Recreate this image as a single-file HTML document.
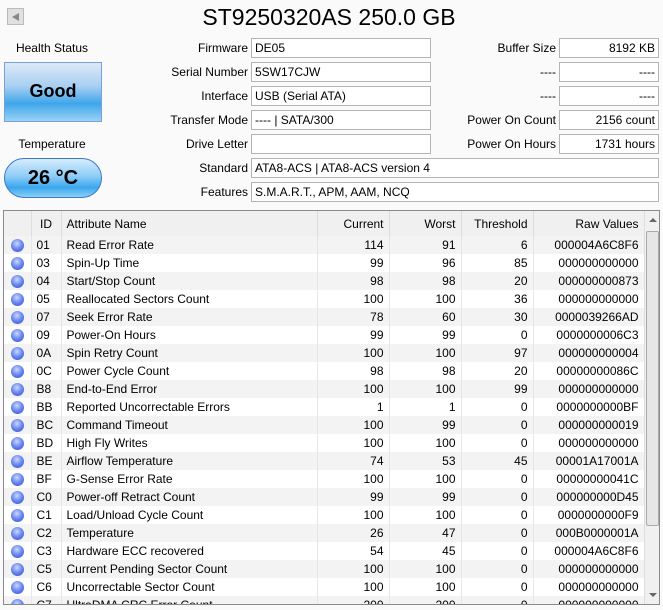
<!DOCTYPE html><html><head><style>
body{margin:0;width:663px;height:610px;background:#fafafa;font-family:"Liberation Sans",sans-serif;font-size:12px;color:#000;position:relative;overflow:hidden}
.a{position:absolute}
.lbl{position:absolute;text-align:right;width:150px}
.box{position:absolute;border:1px solid #b4b4b4;background:#fff;line-height:18px;padding:0 3px;box-sizing:border-box;height:20px}
.r{text-align:right}
table{border-collapse:collapse;table-layout:fixed;position:absolute;left:4px;top:212px;width:640px}
td{height:18px;padding:0 5px;white-space:nowrap;overflow:hidden;border-right:1px solid #e6e6e6;font-size:12px}
th{height:25px;font-weight:normal;padding:0 5px;border-right:1px solid #ddd;background:#f0f0f0;font-size:12px}
tr:nth-child(even) td{background:#f3f3f3}
.n{text-align:right}
.dot{width:13px;height:13px;border-radius:50%;background:radial-gradient(circle at 45% 35%,#cfd8ff 0,#6f8cf2 45%,#2c48c8 100%);margin:0 auto}
</style></head><body>
<div class="a" style="left:7px;top:8px;width:17px;height:17px;background:#e0e0e0;border:1px solid #bbb;box-sizing:border-box;"><div style="margin:4px 0 0 4px;width:0;height:0;border-top:4px solid transparent;border-bottom:4px solid transparent;border-right:7px solid #888"></div></div>
<div class="a" style="left:129px;top:4px;width:400px;text-align:center;font-size:23px">ST9250320AS 250.0 GB</div>
<div class="a" style="left:0;top:41px;width:104px;text-align:center">Health Status</div>
<div class="a" style="left:4px;top:62px;width:98px;height:60px;border:1px solid #7aa0d8;box-sizing:border-box;background:linear-gradient(#dde9f8,#a8cff2 40%,#3ea6ea 70%,#9ad2f6);text-align:center;line-height:56px;font-weight:bold;font-size:18px">Good</div>
<div class="a" style="left:0;top:137px;width:104px;text-align:center">Temperature</div>
<div class="a" style="left:4px;top:158px;width:98px;height:40px;border:1px solid #3a7ac8;box-sizing:border-box;border-radius:20px;background:linear-gradient(#d6ecfc,#8fcdf6 45%,#3aa6ee 75%,#8cd0f6);text-align:center;line-height:38px;font-weight:bold;font-size:20px">26 °C</div>

<div class="lbl" style="left:98px;top:41px">Firmware</div><div class="box" style="left:251px;top:38px;width:180px">DE05</div>
<div class="lbl" style="left:98px;top:65px">Serial Number</div><div class="box" style="left:251px;top:62px;width:180px">5SW17CJW</div>
<div class="lbl" style="left:98px;top:89px">Interface</div><div class="box" style="left:251px;top:86px;width:180px">USB (Serial ATA)</div>
<div class="lbl" style="left:98px;top:113px">Transfer Mode</div><div class="box" style="left:251px;top:110px;width:180px">---- | SATA/300</div>
<div class="lbl" style="left:98px;top:137px">Drive Letter</div><div class="box" style="left:251px;top:134px;width:180px"></div>
<div class="lbl" style="left:98px;top:161px">Standard</div><div class="box" style="left:251px;top:158px;width:408px">ATA8-ACS | ATA8-ACS version 4</div>
<div class="lbl" style="left:98px;top:185px">Features</div><div class="box" style="left:251px;top:182px;width:408px">S.M.A.R.T., APM, AAM, NCQ</div>

<div class="lbl" style="left:406px;top:41px">Buffer Size</div><div class="box r" style="left:559px;top:38px;width:100px">8192 KB</div>
<div class="lbl" style="left:406px;top:65px">----</div><div class="box r" style="left:559px;top:62px;width:100px">----</div>
<div class="lbl" style="left:406px;top:89px">----</div><div class="box r" style="left:559px;top:86px;width:100px">----</div>
<div class="lbl" style="left:406px;top:113px">Power On Count</div><div class="box r" style="left:559px;top:110px;width:100px">2156 count</div>
<div class="lbl" style="left:406px;top:137px">Power On Hours</div><div class="box r" style="left:559px;top:134px;width:100px">1731 hours</div>

<div class="a" style="left:3px;top:210px;width:657px;height:395px;border:1px solid #8a8a8a;box-sizing:border-box;background:#fff;overflow:hidden">
<table style="left:0;top:0">
<colgroup><col style="width:27px"><col style="width:30px"><col style="width:256px"><col style="width:72px"><col style="width:72px"><col style="width:72px"><col style="width:111px"></colgroup>
<tr><th></th><th>ID</th><th style="text-align:left">Attribute Name</th><th class="n">Current</th><th class="n">Worst</th><th class="n">Threshold</th><th class="n">Raw Values</th></tr>
<tr><td><div class="dot"></div></td><td>01</td><td>Read Error Rate</td><td class="n">114</td><td class="n">91</td><td class="n">6</td><td class="n">000004A6C8F6</td></tr>
<tr><td><div class="dot"></div></td><td>03</td><td>Spin-Up Time</td><td class="n">99</td><td class="n">96</td><td class="n">85</td><td class="n">000000000000</td></tr>
<tr><td><div class="dot"></div></td><td>04</td><td>Start/Stop Count</td><td class="n">98</td><td class="n">98</td><td class="n">20</td><td class="n">000000000873</td></tr>
<tr><td><div class="dot"></div></td><td>05</td><td>Reallocated Sectors Count</td><td class="n">100</td><td class="n">100</td><td class="n">36</td><td class="n">000000000000</td></tr>
<tr><td><div class="dot"></div></td><td>07</td><td>Seek Error Rate</td><td class="n">78</td><td class="n">60</td><td class="n">30</td><td class="n">0000039266AD</td></tr>
<tr><td><div class="dot"></div></td><td>09</td><td>Power-On Hours</td><td class="n">99</td><td class="n">99</td><td class="n">0</td><td class="n">0000000006C3</td></tr>
<tr><td><div class="dot"></div></td><td>0A</td><td>Spin Retry Count</td><td class="n">100</td><td class="n">100</td><td class="n">97</td><td class="n">000000000004</td></tr>
<tr><td><div class="dot"></div></td><td>0C</td><td>Power Cycle Count</td><td class="n">98</td><td class="n">98</td><td class="n">20</td><td class="n">00000000086C</td></tr>
<tr><td><div class="dot"></div></td><td>B8</td><td>End-to-End Error</td><td class="n">100</td><td class="n">100</td><td class="n">99</td><td class="n">000000000000</td></tr>
<tr><td><div class="dot"></div></td><td>BB</td><td>Reported Uncorrectable Errors</td><td class="n">1</td><td class="n">1</td><td class="n">0</td><td class="n">0000000000BF</td></tr>
<tr><td><div class="dot"></div></td><td>BC</td><td>Command Timeout</td><td class="n">100</td><td class="n">99</td><td class="n">0</td><td class="n">000000000019</td></tr>
<tr><td><div class="dot"></div></td><td>BD</td><td>High Fly Writes</td><td class="n">100</td><td class="n">100</td><td class="n">0</td><td class="n">000000000000</td></tr>
<tr><td><div class="dot"></div></td><td>BE</td><td>Airflow Temperature</td><td class="n">74</td><td class="n">53</td><td class="n">45</td><td class="n">00001A17001A</td></tr>
<tr><td><div class="dot"></div></td><td>BF</td><td>G-Sense Error Rate</td><td class="n">100</td><td class="n">100</td><td class="n">0</td><td class="n">00000000041C</td></tr>
<tr><td><div class="dot"></div></td><td>C0</td><td>Power-off Retract Count</td><td class="n">99</td><td class="n">99</td><td class="n">0</td><td class="n">000000000D45</td></tr>
<tr><td><div class="dot"></div></td><td>C1</td><td>Load/Unload Cycle Count</td><td class="n">100</td><td class="n">100</td><td class="n">0</td><td class="n">0000000000F9</td></tr>
<tr><td><div class="dot"></div></td><td>C2</td><td>Temperature</td><td class="n">26</td><td class="n">47</td><td class="n">0</td><td class="n">000B0000001A</td></tr>
<tr><td><div class="dot"></div></td><td>C3</td><td>Hardware ECC recovered</td><td class="n">54</td><td class="n">45</td><td class="n">0</td><td class="n">000004A6C8F6</td></tr>
<tr><td><div class="dot"></div></td><td>C5</td><td>Current Pending Sector Count</td><td class="n">100</td><td class="n">100</td><td class="n">0</td><td class="n">000000000000</td></tr>
<tr><td><div class="dot"></div></td><td>C6</td><td>Uncorrectable Sector Count</td><td class="n">100</td><td class="n">100</td><td class="n">0</td><td class="n">000000000000</td></tr>
<tr><td><div class="dot"></div></td><td>C7</td><td>UltraDMA CRC Error Count</td><td class="n">200</td><td class="n">200</td><td class="n">0</td><td class="n">000000000000</td></tr>
</table>
<div class="a" style="left:640px;top:0;width:16px;height:393px;background:#f0f0f0;border-left:1px solid #ddd">
<div class="a" style="left:4px;top:7px;width:0;height:0;border-left:4px solid transparent;border-right:4px solid transparent;border-bottom:4px solid #666"></div>
<div class="a" style="left:1px;top:20px;width:13px;height:295px;background:#e6e6e6;border:1px solid #aaa;box-sizing:border-box;border-radius:2px"></div>
<div class="a" style="left:4px;top:382px;width:0;height:0;border-left:4px solid transparent;border-right:4px solid transparent;border-top:4px solid #666"></div>
</div>
</div>
</body></html>
